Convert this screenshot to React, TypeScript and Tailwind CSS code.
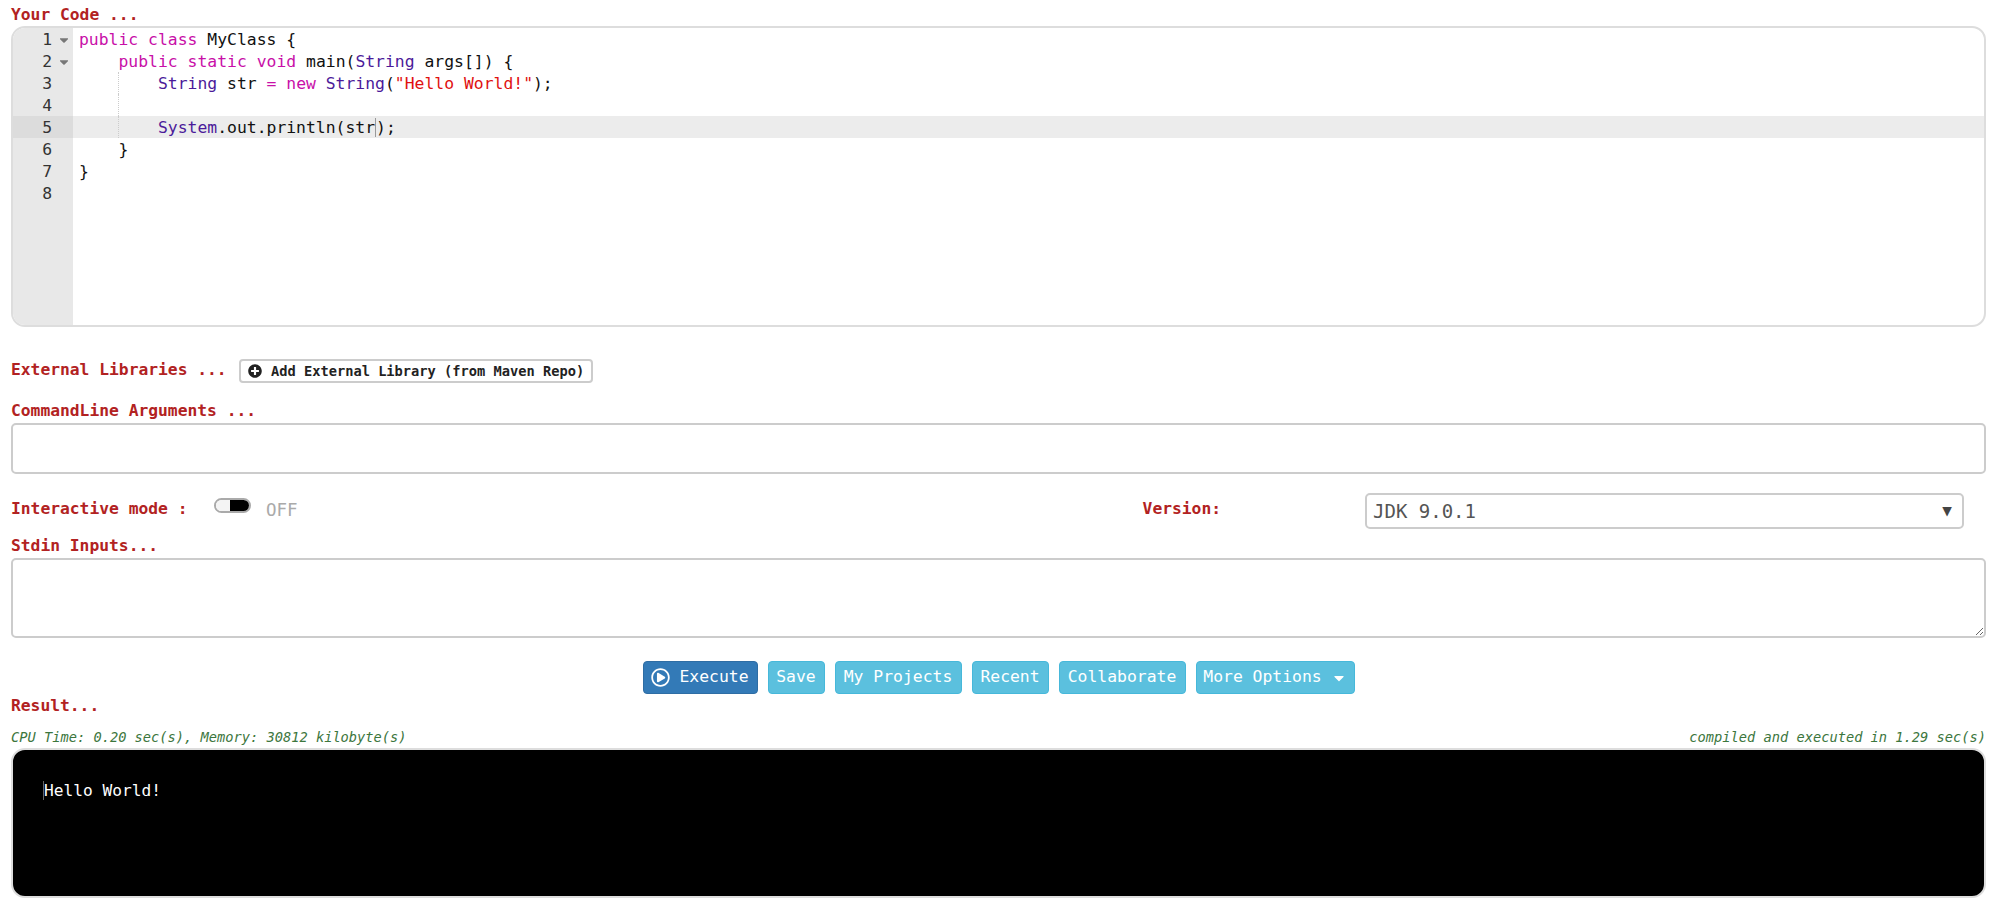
import React from 'react';
import { FaPlusCircle, FaRegPlayCircle, FaCaretDown } from 'react-icons/fa';

const MONO = "font-['DejaVu_Sans_Mono',monospace]";

// ace-style token colours
const Kw = ({ children }: { children: React.ReactNode }) => <span className="text-[#c810a8]">{children}</span>;
const Ty = ({ children }: { children: React.ReactNode }) => <span className="text-[#4b1a9a]">{children}</span>;
const Str = ({ children }: { children: React.ReactNode }) => <span className="text-[#e01010]">{children}</span>;

const codeLines: { fold?: boolean; guide?: boolean; active?: boolean; content: React.ReactNode }[] = [
  { fold: true, content: <><Kw>public</Kw> <Kw>class</Kw> MyClass {'{'}</> },
  { fold: true, content: <>{'    '}<Kw>public</Kw> <Kw>static</Kw> <Kw>void</Kw> main(<Ty>String</Ty> args[]) {'{'}</> },
  { guide: true, content: <>{'        '}<Ty>String</Ty> str <Kw>=</Kw> <Kw>new</Kw> <Ty>String</Ty>(<Str>"Hello World!"</Str>);</> },
  { guide: true, content: <></> },
  {
    guide: true,
    active: true,
    content: <>{'        '}<Ty>System</Ty>.out.println(str<span className="border-l border-[#999]">)</span>;</>,
  },
  { content: <>{'    }'}</> },
  { content: <>{'}'}</> },
  { content: <></> },
];

function Label({ children, className = '' }: { children: React.ReactNode; className?: string }) {
  return <div className={`text-[16.3px] font-bold text-[#b22222] ${className}`}>{children}</div>;
}

function Editor() {
  return (
    <div className="h-[301px] border-2 border-[#dddddd] rounded-[14px] overflow-hidden flex text-[16.4px] whitespace-pre">
      <div className="w-[60px] shrink-0 bg-[#e8e8e8] text-[#333]">
        {codeLines.map((line, i) => (
          <div key={i} className={`h-[22px] pt-[2px] flex items-center pl-[20px] ${line.active ? 'bg-[#dcdcdc]' : ''}`}>
            <span className="w-[19px] text-right">{i + 1}</span>
            {line.fold && <FaCaretDown className="ml-[5px] w-[14px] h-[14px] text-[#777]" />}
          </div>
        ))}
      </div>
      <div className="flex-1 text-[#111] leading-[24px]">
        {codeLines.map((line, i) => (
          <div key={i} className={`h-[22px] relative pl-[6px] ${line.active ? 'bg-[#ececec]' : ''}`}>
            {line.guide && <span className="absolute left-[45px] top-0 bottom-0 border-l border-dotted border-[#ccc]" />}
            {line.content}
          </div>
        ))}
      </div>
    </div>
  );
}

function Btn({ children, primary, className = '' }: { children: React.ReactNode; primary?: boolean; className?: string }) {
  return (
    <button
      className={`h-[33px] flex items-center justify-center rounded-[4px] border text-[16.4px] text-white whitespace-pre ${
        primary ? 'bg-[#337ab7] border-[#2e6da4]' : 'bg-[#5bc0de] border-[#46b8da]'
      } ${className}`}
    >
      {children}
    </button>
  );
}

export default function App() {
  return (
    <div className={`h-[904px] overflow-hidden bg-white px-[11px] ${MONO}`}>
      <Label className="h-[26px] leading-[30px]">Your Code ...</Label>
      <Editor />

      <div className="mt-[32px] h-[24px] flex items-center">
        <Label className="w-[228px] pb-[2px]">External Libraries ...</Label>
        <button className="w-[354px] h-[24px] flex items-center border-2 border-[#cccccc] rounded-[4px] pl-[7px] text-[13.7px] font-semibold text-[#222] whitespace-pre">
          <FaPlusCircle className="w-[14px] h-[14px] mr-[9px] text-[#222]" />
          Add External Library (from Maven Repo)
        </button>
      </div>

      <Label className="mt-[16px] h-[24px] leading-[24px]">CommandLine Arguments ...</Label>
      <input className="block w-full h-[51px] border-2 border-[#cccccc] rounded-[5px] outline-none" />

      <div className="mt-[19px] h-[36px] flex items-start relative">
        <Label className="w-[203px] leading-[32px]">Interactive mode :</Label>
        <div className="mt-[5px] w-[37px] h-[15px] flex border-2 border-[#aaaaaa] rounded-[8px] overflow-hidden">
          <div className="w-[14px] bg-[#f4f4f4]" />
          <div className="flex-1 bg-black" />
        </div>
        <span className="ml-[15px] mt-[6px] text-[17.5px] leading-[22px] text-[#aaaaaa]">OFF</span>
        <Label className="ml-[845px] leading-[32px]">Version:</Label>
        <div className="absolute left-[1354px] top-0 w-[599px] h-[36px] flex items-center justify-between border-2 border-[#cccccc] rounded-[5px] pl-[6px] pr-[10px] text-[19px] text-[#555]">
          <span>JDK 9.0.1</span>
          <span className="text-[16px] text-[#444]">▼</span>
        </div>
      </div>

      <Label className="mt-[5px] h-[24px] leading-[24px]">Stdin Inputs...</Label>
      <textarea className="block w-full h-[80px] border-2 border-[#cccccc] rounded-[5px] outline-none" />

      <div className="mt-[23px] flex justify-center gap-[10px]">
        <Btn primary className="w-[115px]">
          <FaRegPlayCircle className="w-[19px] h-[19px] mr-[9px]" />
          Execute
        </Btn>
        <Btn className="w-[57px]">Save</Btn>
        <Btn className="w-[127px]">My Projects</Btn>
        <Btn className="w-[77px]">Recent</Btn>
        <Btn className="w-[127px]">Collaborate</Btn>
        <Btn className="w-[159px]">
          More Options
          <FaCaretDown className="ml-[9px] w-[16px] h-[16px]" />
        </Btn>
      </div>

      <Label className="mt-[0px] h-[24px] leading-[24px]">Result...</Label>
      <div className="mt-[7px] h-[23px] flex justify-between text-[13.7px] italic leading-[24px] text-[#3c763d]">
        <span>CPU Time: 0.20 sec(s), Memory: 30812 kilobyte(s)</span>
        <span>compiled and executed in 1.29 sec(s)</span>
      </div>
      <div className="h-[150px] bg-black border-2 border-[#dddddd] rounded-[14px] pt-[30px] pl-[30px] text-[16.2px] leading-[22px] text-white">
        <span className="border-l border-[#666]">Hello World!</span>
      </div>
    </div>
  );
}
